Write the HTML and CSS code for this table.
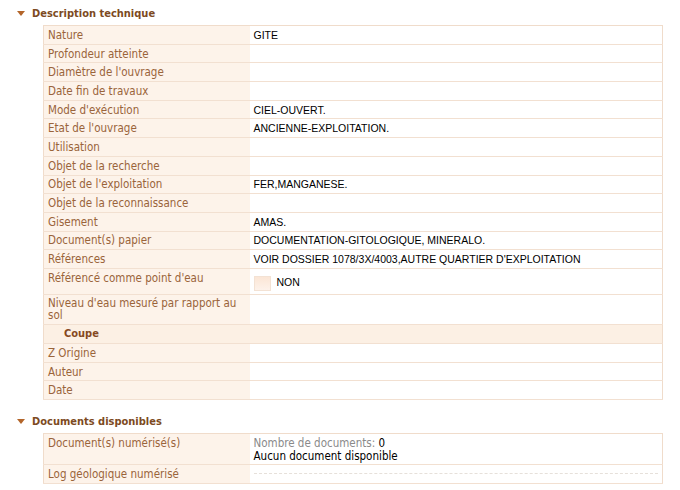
FILE: index.html
```html
<!DOCTYPE html>
<html lang="fr">
<head>
<meta charset="utf-8">
<title>Fiche</title>
<link rel="stylesheet" href="styles.css">
</head>
<body>
<section class="section">
  <h2 class="section-title"><span class="caret"></span>Description technique</h2>
  <table class="grid">
    <colgroup><col class="col-lbl"><col class="col-val"></colgroup>
    <tr><td class="lbl">Nature</td><td class="val">GITE</td></tr>
    <tr><td class="lbl">Profondeur atteinte</td><td class="val"></td></tr>
    <tr><td class="lbl">Diamètre de l'ouvrage</td><td class="val"></td></tr>
    <tr><td class="lbl">Date fin de travaux</td><td class="val"></td></tr>
    <tr><td class="lbl">Mode d'exécution</td><td class="val">CIEL-OUVERT.</td></tr>
    <tr><td class="lbl">Etat de l'ouvrage</td><td class="val">ANCIENNE-EXPLOITATION.</td></tr>
    <tr><td class="lbl">Utilisation</td><td class="val"></td></tr>
    <tr><td class="lbl">Objet de la recherche</td><td class="val"></td></tr>
    <tr><td class="lbl">Objet de l'exploitation</td><td class="val">FER,MANGANESE.</td></tr>
    <tr><td class="lbl">Objet de la reconnaissance</td><td class="val"></td></tr>
    <tr><td class="lbl">Gisement</td><td class="val">AMAS.</td></tr>
    <tr><td class="lbl">Document(s) papier</td><td class="val">DOCUMENTATION-GITOLOGIQUE, MINERALO.</td></tr>
    <tr><td class="lbl">Références</td><td class="val">VOIR DOSSIER 1078/3X/4003,AUTRE QUARTIER D'EXPLOITATION</td></tr>
    <tr><td class="lbl">Référencé comme point d'eau</td><td class="val"><div class="check-row"><span class="checkbox"></span><span class="check-label">NON</span></div></td></tr>
    <tr><td class="lbl">Niveau d'eau mesuré par rapport au sol</td><td class="val"></td></tr>
    <tr class="sub"><td class="lbl sub-title">Coupe</td><td class="val"></td></tr>
    <tr><td class="lbl">Z Origine</td><td class="val"></td></tr>
    <tr><td class="lbl">Auteur</td><td class="val"></td></tr>
    <tr><td class="lbl">Date</td><td class="val"></td></tr>
  </table>
</section>
<section class="section">
  <h2 class="section-title"><span class="caret"></span>Documents disponibles</h2>
  <table class="grid">
    <colgroup><col class="col-lbl"><col class="col-val"></colgroup>
    <tr class="docs-row"><td class="lbl">Document(s) numérisé(s)</td><td class="val docs"><span class="muted">Nombre de documents:</span> 0<br>Aucun document disponible</td></tr>
    <tr><td class="lbl">Log géologique numérisé</td><td class="val"><div class="dash"></div></td></tr>
  </table>
</section>
</body>
</html>
```
FILE: styles.css
```css
html, body {
  margin: 0;
  padding: 0;
  background: #ffffff;
}
body {
  padding: 6px 18px 0 15px;
  font-family: "DejaVu Sans Condensed", "DejaVu Sans", sans-serif;
  font-size: 11px;
}
.section {
  margin-bottom: 14px;
}
.section-title {
  display: flex;
  align-items: center;
  margin: 0;
  height: 14px;
  font-size: 11px;
  font-weight: bold;
  color: #7d4a22;
}
.caret {
  width: 0;
  height: 0;
  border-left: 4px solid transparent;
  border-right: 4px solid transparent;
  border-top: 5px solid #b3652a;
  margin: 0 7px 0 2px;
}
.grid {
  margin: 5px 0 0 28px;
  width: 620px;
  table-layout: fixed;
  border-collapse: collapse;
  border: 1px solid #f0dccb;
}
.col-lbl {
  width: 206px;
}
.grid td {
  padding: 2.85px 4px;
  line-height: 12px;
  border-bottom: 1px solid #f2e0d1;
  vertical-align: top;
}
.lbl {
  background: #fdf3ea;
  color: #9a643a;
  font-size: 11.5px;
}
.val {
  background: #ffffff;
  color: #000000;
  font-family: "Liberation Sans", Arial, sans-serif;
  font-size: 10.5px;
}
.sub td {
  background: #fcf0e4;
}
.sub-title {
  font-weight: bold;
  font-size: 11px;
  color: #86491f;
  padding-left: 20px !important;
}
.check-row {
  display: flex;
  align-items: flex-start;
  gap: 6px;
}
.checkbox {
  width: 17px;
  height: 15px;
  margin-top: 4px;
  background: linear-gradient(#fbe6d6, #fdf2ea);
  border: 1px solid #f3e2d4;
  box-sizing: border-box;
}
.check-label {
  margin-top: 4px;
}
.docs-row td {
  padding-top: 3px;
  padding-bottom: 1px;
}
.grid td.docs {
  font-family: "DejaVu Sans Condensed", "DejaVu Sans", sans-serif;
  font-size: 11.5px;
  line-height: 13px;
  padding-top: 2.5px;
  padding-bottom: 1.5px;
}
.muted {
  color: #8a8a8a;
}
.dash {
  margin-top: 5px;
  border-top: 1px dashed #e6e0da;
}
```
